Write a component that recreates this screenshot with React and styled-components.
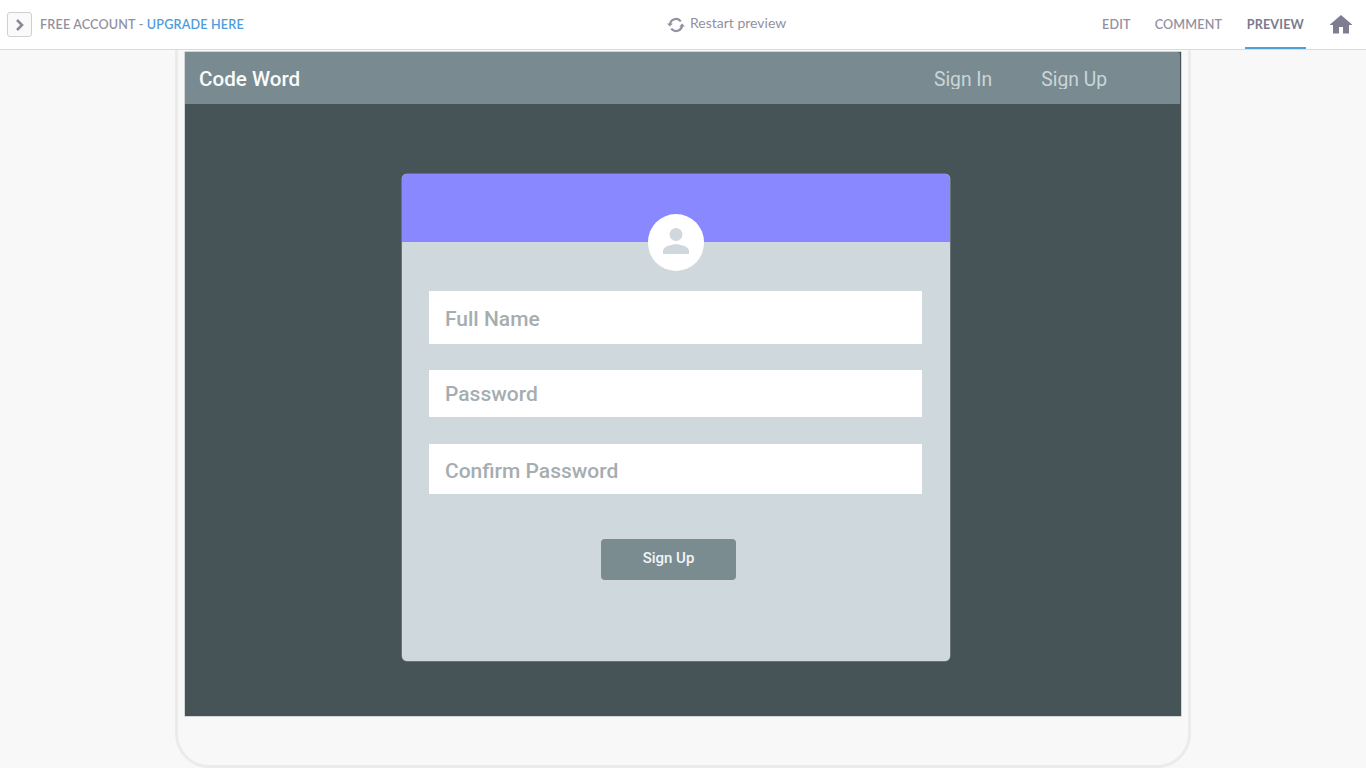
import React from "react";
import styled, { createGlobalStyle } from "styled-components";

const GlobalStyle = createGlobalStyle`
  * { box-sizing: border-box; }
  body { margin: 0; background: #f8f8f8; overflow: hidden; }
  button { border: 0; padding: 0; background: none; font: inherit; color: inherit; }
`;

const Page = styled.div`
  width: 1366px;
  height: 768px;
  display: flex;
  flex-direction: column;
  overflow: hidden;
  font-family: Lato, sans-serif;
`;

const Toolbar = styled.header`
  flex: none;
  height: 50px;
  display: grid;
  grid-template-columns: 664px auto 1fr;
  background: #fff;
  border-bottom: 1px solid #d9dbdc;
  color: #93919f;
`;

const Account = styled.div`
  display: flex;
  align-items: center;
  padding-left: 7px;
  font-size: 12.6px;
  font-weight: 600;
  letter-spacing: 0.17px;
  white-space: pre;
`;

const ExpandButton = styled.button`
  width: 25px;
  height: 25px;
  margin-right: 8px;
  display: flex;
  align-items: center;
  justify-content: center;
  border: 1px solid #cfcfd4;
  border-radius: 3px;
  background: #fafafb;
`;

const UpgradeLink = styled.span`
  color: #4f9bde;
`;

const Restart = styled.button`
  display: flex;
  align-items: center;
  gap: 5px;
  height: 49px;
  padding-left: 3px;
  font-size: 14px;
`;

const RestartLabel = styled.span`
  padding-bottom: 4px;
`;

const Modes = styled.nav`
  display: flex;
  justify-content: flex-end;
  align-items: stretch;
  padding-right: 14px;
`;

const Mode = styled.button`
  height: 49px;
  padding: 0 2px;
  margin-left: ${(p) => p.$gap}px;
  font-size: 12.6px;
  font-weight: ${(p) => (p.$active ? 700 : 600)};
  letter-spacing: 0.17px;
  color: ${(p) => (p.$active ? "#7c7a8c" : "#93919f")};
  border-bottom: 2px solid ${(p) => (p.$active ? "#4fa0d8" : "transparent")};
  border-top: 2px solid transparent;
`;

const HomeButton = styled.button`
  display: flex;
  align-items: center;
  margin-left: 24px;
`;

const Device = styled.main`
  width: 1016px;
  height: 718px;
  margin-left: 175px;
  padding: 2px 7px 0;
  border: 3px solid #ebebeb;
  border-top: 0;
  border-radius: 0 0 34px 34px;
`;

const Screen = styled.div`
  width: 996px;
  height: 664px;
  display: flex;
  flex-direction: column;
  align-items: flex-start;
  background: #465357;
  box-shadow: 0 0 0 0.5px #aab3b6;
  font-family: Roboto, sans-serif;
`;

const AppBar = styled.div`
  width: 995px;
  height: 52px;
  flex: none;
  display: flex;
  align-items: center;
  padding: 3px 73px 0 14px;
  background: #798b90;
  border-radius: 0 3px 0 0;
`;

const Brand = styled.div`
  flex: 1;
  padding-bottom: 2px;
  font-size: 20.6px;
  font-weight: 500;
  color: #fafcfc;
`;

const NavLink = styled.a`
  height: 18px;
  margin-left: ${(p) => p.$gap || 0}px;
  overflow: hidden;
  font-size: 19.3px;
  line-height: 17px;
  color: #cad5da;
`;

const Card = styled.section`
  width: 548px;
  height: 487px;
  margin: 70px 0 0 217px;
  display: flex;
  flex-direction: column;
  border-radius: 5px;
  background: #cfd8dd;
  box-shadow: 0 0 0 0.5px #879397;
`;

const Banner = styled.div`
  flex: none;
  height: 67.5px;
  display: flex;
  justify-content: center;
  padding-top: 40px;
  border-radius: 5px 5px 0 0;
  background: #8a88ff;
`;

const Avatar = styled.div`
  width: 56.5px;
  height: 56.5px;
  flex: none;
  display: flex;
  align-items: center;
  justify-content: center;
  padding-bottom: 3px;
  border-radius: 50%;
  background: #fff;
`;

const Fields = styled.div`
  display: flex;
  flex-direction: column;
  padding: 49.5px 28px 0 27px;
`;

const Field = styled.label`
  height: ${(p) => p.$height}px;
  margin-bottom: ${(p) => p.$after}px;
  display: flex;
  align-items: center;
  padding: ${(p) => p.$drop}px 0 0 16px;
  background: #fff;
  font-size: 21px;
  font-weight: 500;
  color: #a6adb0;
`;

const Submit = styled.button`
  width: 135px;
  height: 41px;
  margin-left: 199px;
  padding-bottom: 3px;
  border-radius: 4px;
  background: #7b8c91;
  color: #f1f5f6;
  font-size: 15px;
  font-weight: 500;
`;

const fields = [
  { label: "Full Name", height: 53, after: 25.5, drop: 2 },
  { label: "Password", height: 47.5, after: 26.5, drop: 1 },
  { label: "Confirm Password", height: 50.5, after: 44.5, drop: 4 },
];

const ChevronIcon = () => (
  <svg width="10" height="14" viewBox="0 0 10 14" fill="none">
    <path d="M2 2l5 5-5 5" stroke="#8b8994" strokeWidth="2.6" />
  </svg>
);

const RefreshIcon = () => (
  <svg width="18" height="16" viewBox="0 0 18 16" fill="none">
    <path d="M3 7.6A6 6 0 0 1 13.8 4.4M15 8.4A6 6 0 0 1 4.2 11.6" stroke="#93919f" strokeWidth="2.3" />
    <path d="M0 6.6h5.8L2.9 9.6zM12.2 9.4H18L15.1 6.4z" fill="#93919f" />
  </svg>
);

const HomeIcon = () => (
  <svg width="22" height="19" viewBox="0 0 22 19">
    <path d="M11 0L0 9.5V10h3v8.5h6V12h4v6.5h6V10h3v-.5z" fill="#7e7c90" />
  </svg>
);

const PersonIcon = () => (
  <svg width="26" height="26" viewBox="0 0 26 26">
    <circle cx="13" cy="6.5" r="6.5" fill="#cfd8dd" />
    <path d="M0 26v-3.2c0-4.3 8.7-6.5 13-6.5s13 2.2 13 6.5V26z" fill="#cfd8dd" />
  </svg>
);

export default function App() {
  return (
    <Page>
      <GlobalStyle />
      <Toolbar>
        <Account>
          <ExpandButton><ChevronIcon /></ExpandButton>
          <span>FREE ACCOUNT - </span>
          <UpgradeLink>UPGRADE HERE</UpgradeLink>
        </Account>
        <Restart>
          <RefreshIcon />
          <RestartLabel>Restart preview</RestartLabel>
        </Restart>
        <Modes>
          <Mode $gap={0}>EDIT</Mode>
          <Mode $gap={20}>COMMENT</Mode>
          <Mode $gap={20.5} $active>PREVIEW</Mode>
          <HomeButton><HomeIcon /></HomeButton>
        </Modes>
      </Toolbar>
      <Device>
        <Screen>
          <AppBar>
            <Brand>Code Word</Brand>
            <NavLink>Sign In</NavLink>
            <NavLink $gap={49}>Sign Up</NavLink>
          </AppBar>
          <Card>
            <Banner>
              <Avatar><PersonIcon /></Avatar>
            </Banner>
            <Fields>
              {fields.map((f) => (
                <Field key={f.label} $height={f.height} $after={f.after} $drop={f.drop}>
                  {f.label}
                </Field>
              ))}
            </Fields>
            <Submit type="button">Sign Up</Submit>
          </Card>
        </Screen>
      </Device>
    </Page>
  );
}
